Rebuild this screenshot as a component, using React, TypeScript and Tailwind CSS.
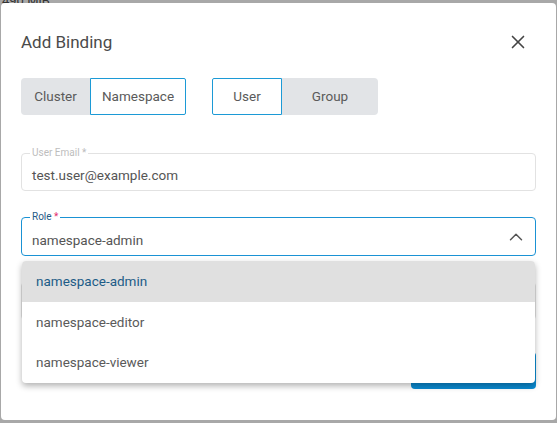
import { X, ChevronUp } from 'lucide-react';

const font = { fontFamily: 'Roboto, "Liberation Sans", sans-serif' };

export default function App() {
  return (
    <div className="w-[557px] h-[423px] bg-[#a8a8a8] overflow-hidden relative" style={font}>
      {/* page behind the overlay */}
      <div className="absolute left-[2px] -top-[9px] text-[13px] text-[#333]">490 MiB</div>

      <div className="absolute left-[1px] top-[3px] w-[555px] h-[417px] bg-white rounded-[4px] px-5">
        {/* Header */}
        <div className="flex items-center justify-between h-[22px] mt-[28px]">
          <h2 className="text-[17px] leading-[22px] text-[#4a4a4a]">Add Binding</h2>
          <button className="mr-[7px] text-[#444]">
            <X size={22} strokeWidth={1.8} />
          </button>
        </div>

        {/* Toggles */}
        <div className="flex gap-[26px] mt-[25px]">
          <div className="flex h-[37px] text-[13.5px] text-[#5a5a5a]">
            <button className="w-[69px] bg-[#e2e4e7] rounded-l-[4px]">Cluster</button>
            <button className="w-[96px] bg-white border border-[#1c9ad6] rounded-r-[2px]">Namespace</button>
          </div>
          <div className="flex h-[37px] text-[13.5px] text-[#5a5a5a]">
            <button className="w-[70px] bg-white border border-[#1c9ad6] rounded-l-[2px]">User</button>
            <button className="w-[96px] bg-[#e2e4e7] rounded-r-[4px]">Group</button>
          </div>
        </div>

        {/* User email */}
        <div className="relative mt-[38px] h-[38px] border border-[#e2e2e2] rounded-[4px] flex items-center px-[10px]">
          <span className="absolute -top-[7px] left-[8px] bg-white px-[2px] text-[10px] leading-[12px] text-[#bdbdbd]">User Email *</span>
          <span className="text-[13.5px] text-[#555] pt-[6px]">test.user@example.com</span>
        </div>

        {/* Role */}
        <div className="relative mt-[26px] h-[39px] border border-[#1a92d4] rounded-[4px] flex items-center justify-between pl-[10px] pr-[8px]">
          <span className="absolute -top-[7px] left-[8px] bg-white px-[2px] text-[10px] leading-[12px] text-[#1f5b86]">
            Role <span className="text-[#e3306b]">*</span>
          </span>
          <span className="text-[13.5px] text-[#555] pt-[7px]">namespace-admin</span>
          <ChevronUp size={22} strokeWidth={1.6} className="text-[#555]" />
        </div>

        {/* Hidden field behind menu */}
        <div className="mt-[26px] h-[38px] border border-[#e2e2e2] rounded-[4px]" />

        {/* Footer */}
        <div className="flex justify-end mt-[32px]">
          <button className="w-[125px] h-[37px] rounded-[4px] bg-[#0a8bd2]" />
        </div>

        {/* Dropdown menu */}
        <div className="absolute left-[21px] top-[258px] w-[513px] bg-white rounded-[4px] shadow-[0_3px_6px_rgba(0,0,0,0.3)] overflow-hidden text-[13.5px]">
          <div className="h-[41px] flex items-center px-[14px] bg-[#e0e0e0] text-[#1d5c87]">namespace-admin</div>
          <div className="h-[40px] flex items-center px-[14px] text-[#5a5a5a]">namespace-editor</div>
          <div className="h-[41px] flex items-center px-[14px] text-[#5a5a5a]">namespace-viewer</div>
        </div>
      </div>
    </div>
  );
}
